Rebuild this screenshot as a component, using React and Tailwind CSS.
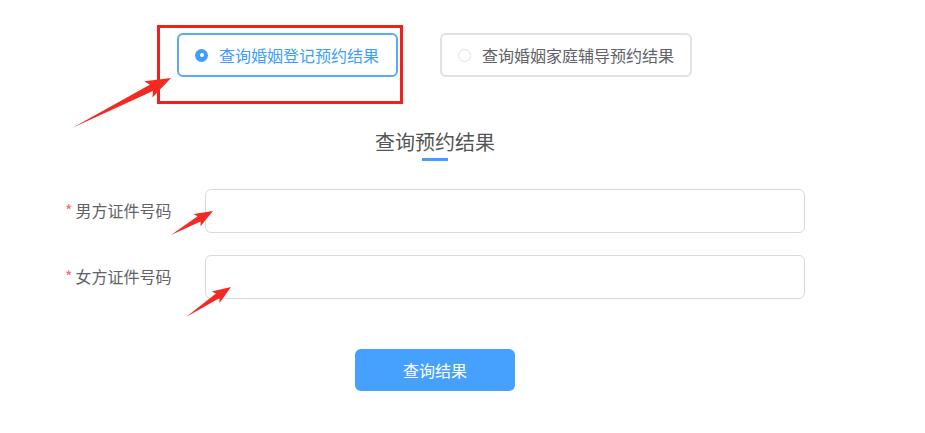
import React from 'react'

const FONT = { fontFamily: '"Noto Sans CJK SC", "Noto Sans", sans-serif' }

// 截图标注箭头：尾部细、头部有两翼
function arrowPoints([tx, ty], [px, py], head = 20, wing = 8, neck = 3) {
  const len = Math.hypot(px - tx, py - ty)
  const dx = (px - tx) / len
  const dy = (py - ty) / len
  const nx = -dy
  const ny = dx
  const bx = px - dx * head
  const by = py - dy * head
  const wx = px - dx * head * 1.15
  const wy = py - dy * head * 1.15
  const pts = [
    [tx, ty],
    [bx + nx * neck, by + ny * neck],
    [wx + nx * wing, wy + ny * wing],
    [px, py],
    [wx - nx * wing, wy - ny * wing],
    [bx - nx * neck, by - ny * neck],
  ]
  return pts.map(p => p.join(',')).join(' ')
}

const ARROWS = [
  { from: [72, 128], to: [171, 78], head: 22, wing: 9, neck: 3.5 },
  { from: [171, 235], to: [213, 211], head: 16, wing: 7, neck: 3 },
  { from: [186, 317], to: [231, 287], head: 16, wing: 7, neck: 3 },
]

function RadioCard({ label, active, width }) {
  return (
    <div
      className={`flex items-center h-[44px] pl-[16px] rounded-[6px] border-2 bg-white ${
        active ? 'border-[#5aa8f8]' : 'border-[#dfe1e6]'
      }`}
      style={{ width }}
    >
      {active ? (
        <span className="w-[13px] h-[13px] rounded-full bg-[#409eff] flex items-center justify-center shrink-0">
          <span className="w-[4px] h-[4px] rounded-full bg-white" />
        </span>
      ) : (
        <span className="w-[13px] h-[13px] rounded-full border border-[#dcdfe6] bg-white shrink-0" />
      )}
      <span className={`ml-[11px] text-[16px] leading-none whitespace-nowrap ${active ? 'text-[#409eff]' : 'text-[#606266]'}`}>
        {label}
      </span>
    </div>
  )
}

function FormRow({ label }) {
  return (
    <div className="flex items-center">
      <div className="w-[205px] shrink-0 pl-[65px] pb-[3px] text-[16px] text-[#606266] leading-none whitespace-nowrap">
        <span className="text-[#f56c6c] mr-[3px]">*</span>
        {label}
      </div>
      <input className="w-[600px] h-[44px] rounded-[6px] border border-[#d6d8dd] bg-white outline-none" />
    </div>
  )
}

export default function App() {
  return (
    <div className="relative w-[925px] h-[433px] bg-white overflow-hidden" style={FONT}>
      <div className="flex gap-[42px] pt-[33px] pl-[177px]">
        <RadioCard label="查询婚姻登记预约结果" active width={221} />
        <RadioCard label="查询婚姻家庭辅导预约结果" width={252} />
      </div>

      <div className="flex flex-col items-center mt-[51px] w-[870px]">
        <div className="text-[20px] leading-[28px] text-[#555]">查询预约结果</div>
        <div className="w-[26px] h-[3px] bg-[#409eff] mt-[2px]" />
      </div>

      <div className="flex flex-col gap-[22px] mt-[28px]">
        <FormRow label="男方证件号码" />
        <FormRow label="女方证件号码" />
      </div>

      <div className="mt-[50px] pl-[355px]">
        <button className="w-[160px] h-[42px] rounded-[6px] bg-[#45a1fd] text-white text-[16px]">
          查询结果
        </button>
      </div>

      {/* 标注层 */}
      <div className="absolute left-[157px] top-[25px] w-[246px] h-[79px] border-[3px] border-[#f0201c] pointer-events-none" />
      <svg className="absolute inset-0 pointer-events-none" width="925" height="433">
        {ARROWS.map((a, i) => (
          <polygon key={i} points={arrowPoints(a.from, a.to, a.head, a.wing, a.neck)} fill="#f32a22" />
        ))}
      </svg>
    </div>
  )
}
